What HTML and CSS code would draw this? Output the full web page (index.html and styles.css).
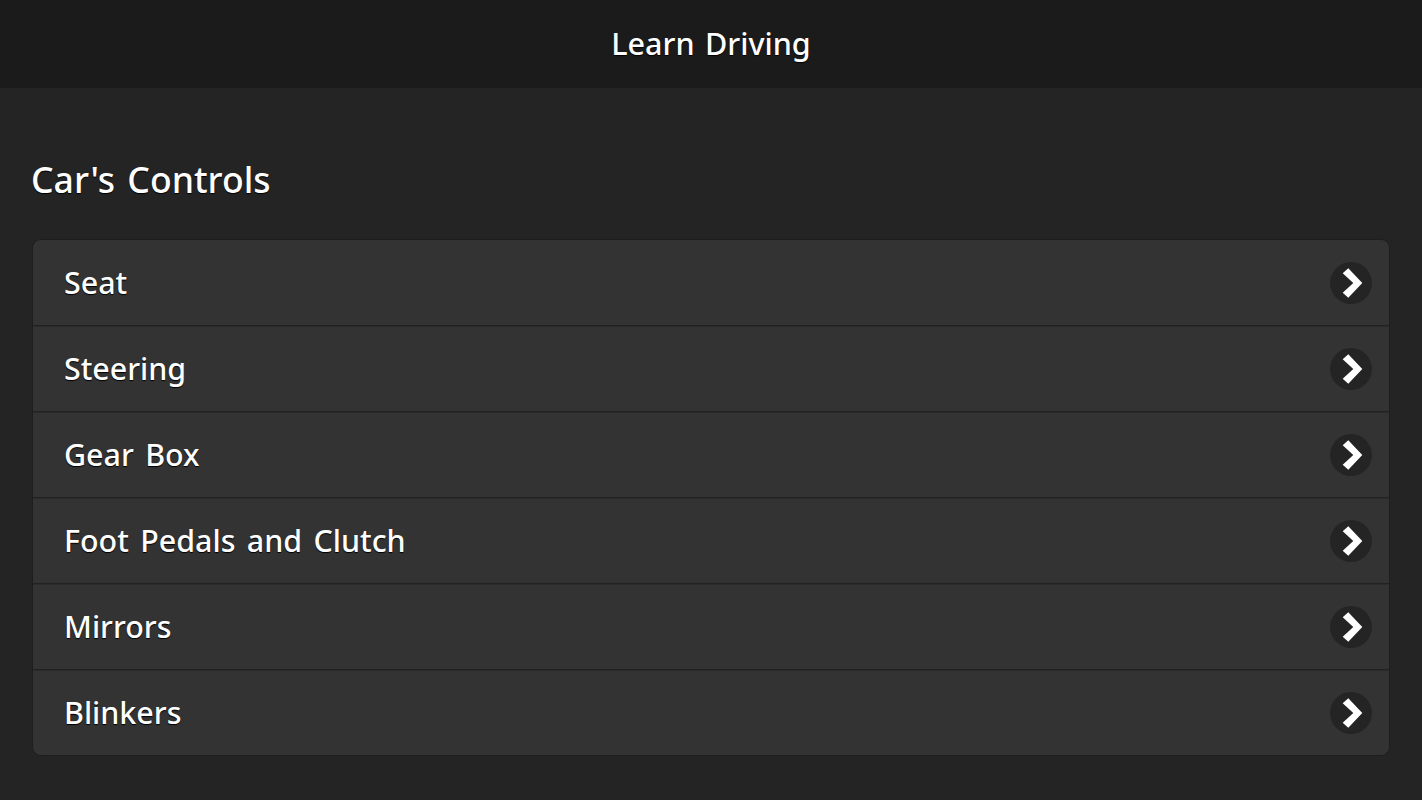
FILE: index.html
```html
<!DOCTYPE html>
<html lang="en">
<head>
<meta charset="utf-8">
<title>Learn Driving</title>
<link rel="stylesheet" href="styles.css">
</head>
<body>
<header class="app-bar"><h1 class="app-title">Learn Driving</h1></header>
<main class="content">
  <h2 class="section-title">Car's Controls</h2>
  <ul class="menu">
    <li class="menu-item"><span class="menu-label">Seat</span><span class="chev"><svg viewBox="0 0 42 42" width="42" height="42"><polygon class="chev-path" points="18.3,6.3 12.7,11.3 23.3,21 12.7,30.7 18.3,35.7 32.3,21"/></svg></span></li>
    <li class="menu-item"><span class="menu-label">Steering</span><span class="chev"><svg viewBox="0 0 42 42" width="42" height="42"><polygon class="chev-path" points="18.3,6.3 12.7,11.3 23.3,21 12.7,30.7 18.3,35.7 32.3,21"/></svg></span></li>
    <li class="menu-item"><span class="menu-label">Gear Box</span><span class="chev"><svg viewBox="0 0 42 42" width="42" height="42"><polygon class="chev-path" points="18.3,6.3 12.7,11.3 23.3,21 12.7,30.7 18.3,35.7 32.3,21"/></svg></span></li>
    <li class="menu-item"><span class="menu-label">Foot Pedals and Clutch</span><span class="chev"><svg viewBox="0 0 42 42" width="42" height="42"><polygon class="chev-path" points="18.3,6.3 12.7,11.3 23.3,21 12.7,30.7 18.3,35.7 32.3,21"/></svg></span></li>
    <li class="menu-item"><span class="menu-label">Mirrors</span><span class="chev"><svg viewBox="0 0 42 42" width="42" height="42"><polygon class="chev-path" points="18.3,6.3 12.7,11.3 23.3,21 12.7,30.7 18.3,35.7 32.3,21"/></svg></span></li>
    <li class="menu-item"><span class="menu-label">Blinkers</span><span class="chev"><svg viewBox="0 0 42 42" width="42" height="42"><polygon class="chev-path" points="18.3,6.3 12.7,11.3 23.3,21 12.7,30.7 18.3,35.7 32.3,21"/></svg></span></li>
  </ul>
</main>
</body>
</html>
```
FILE: styles.css
```css
* { box-sizing: border-box; }
html, body { margin: 0; padding: 0; }
body {
  height: 800px;
  overflow: hidden;
  background: #242424;
  color: #fff;
  font-family: "Noto Sans", "Open Sans", sans-serif;
}
.app-bar {
  height: 88px;
  background: #1b1b1b;
  display: flex;
  align-items: center;
  justify-content: center;
}
.app-title {
  margin: 0 0 1px;
  font-size: 30.5px;
  font-weight: 500;
  line-height: 1;
  word-spacing: 2.5px;
  text-shadow: 0 1px 1px #000;
}
.content { padding: 70px 32px 0; }
.section-title {
  margin: 0 0 0 -1px;
  height: 81px;
  font-size: 35.6px;
  font-weight: 500;
  line-height: 42px;
  word-spacing: 3px;
  text-shadow: 0 1px 1px #000;
}
.menu {
  list-style: none;
  margin: 0;
  padding: 0;
  width: 1358px;
  border: 1px solid #1e1e1e;
  border-radius: 9px;
  overflow: hidden;
}
.menu-item {
  height: 86px;
  background: #333;
  border-top: 1px solid #2b2b2b;
  border-bottom: 1px solid #222;
  display: flex;
  align-items: center;
  justify-content: space-between;
  padding: 0 17px 0 31px;
}
.menu-item:first-child { border-top: 0; }
.menu-item:last-child { border-bottom: 0; height: 85px; padding-bottom: 1px; }
.menu-label {
  font-size: 30.4px;
  font-weight: 500;
  word-spacing: 3.5px;
  text-shadow: 0 1px 1px #000;
}
.menu-item:not(:first-child):not(:last-child) .menu-label { margin-bottom: 2px; }
.chev {
  width: 42px;
  height: 42px;
  border-radius: 50%;
  background: #242424;
  display: block;
}
.chev svg { display: block; }
.chev-path { fill: #fff; }
```
